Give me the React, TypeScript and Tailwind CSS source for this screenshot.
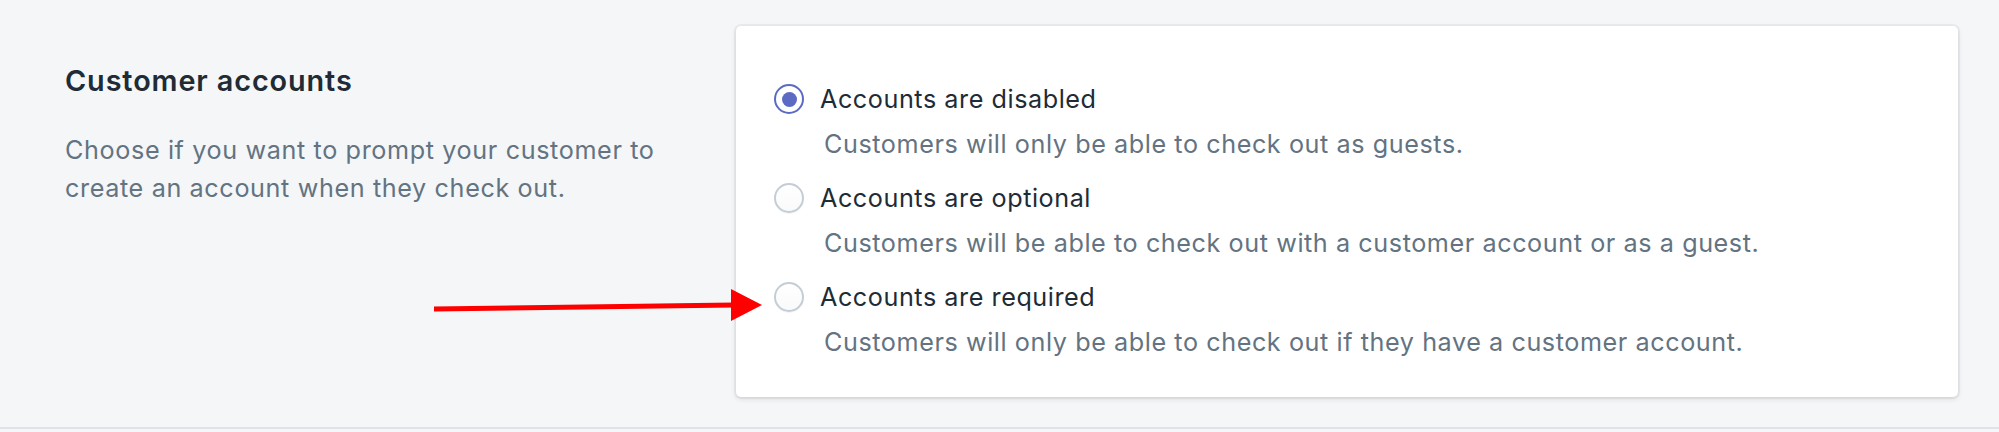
const options = [
  {
    id: "disabled",
    label: "Accounts are disabled",
    helper: "Customers will only be able to check out as guests.",
  },
  {
    id: "optional",
    label: "Accounts are optional",
    helper: "Customers will be able to check out with a customer account or as a guest.",
  },
  {
    id: "required",
    label: "Accounts are required",
    helper: "Customers will only be able to check out if they have a customer account.",
  },
];

export default function App() {
  const selected = "disabled";

  return (
    <div
      className="relative h-[432px] w-full overflow-hidden bg-[#f4f6f8]"
      style={{ fontFamily: "Inter, 'Noto Sans', sans-serif" }}
    >
      <section className="flex h-[429px] border-b-2 border-[#dfe3e8] pl-[65px] pr-[41px] pt-[26px]">
        <div className="w-[671px] shrink-0 pt-[37px]">
          <h2 className="text-[28.8px] font-semibold leading-[36px] tracking-[0.9px] text-[#212b36]">
            Customer accounts
          </h2>
          <p className="mt-[32px] w-[620px] text-[25.2px] leading-[38px] tracking-[0.62px] text-[#637381]">
            Choose if you want to prompt your customer to create an account when they check out.
          </p>
        </div>

        <div className="h-[371px] flex-1 rounded-[5px] bg-white px-[38px] pt-[55px] shadow-[0_0_0_2px_rgba(63,63,68,0.05),0_2px_5px_0_rgba(63,63,68,0.15)]">
          <ul className="space-y-[18px]">
            {options.map((option) => (
              <RadioOption
                key={option.id}
                label={option.label}
                helper={option.helper}
                checked={option.id === selected}
              />
            ))}
          </ul>
        </div>
      </section>

      {/* annotation arrow drawn over the page */}
      <svg
        className="pointer-events-none absolute left-0 top-0"
        width="1999"
        height="432"
        viewBox="0 0 1999 432"
      >
        <line x1="434" y1="309" x2="734" y2="305" stroke="#fe0000" strokeWidth="5" />
        <polygon points="731,289 762,305 731,321" fill="#fe0000" />
      </svg>
    </div>
  );
}

function RadioOption({ label, helper, checked }: { label: string; helper: string; checked: boolean }) {
  return (
    <li>
      <div className="flex h-[36px] items-center">
        {checked ? (
          <span className="flex h-[30px] w-[30px] items-center justify-center rounded-full border-2 border-[#5c6ac4] bg-white">
            <span className="h-[15px] w-[15px] rounded-full bg-[#5c6ac4]" />
          </span>
        ) : (
          <span className="h-[30px] w-[30px] rounded-full border-2 border-[#c4cdd5] bg-gradient-to-b from-white to-[#f9fafb] shadow-[0_1px_0_0_rgba(22,29,37,0.05)]" />
        )}
        <span className="ml-[16px] text-[25.2px] leading-[36px] tracking-[0.55px] text-[#212b36]">{label}</span>
      </div>
      <p className="mt-[9px] pl-[50px] text-[25.2px] leading-[36px] tracking-[0.57px] text-[#637381]">{helper}</p>
    </li>
  );
}
